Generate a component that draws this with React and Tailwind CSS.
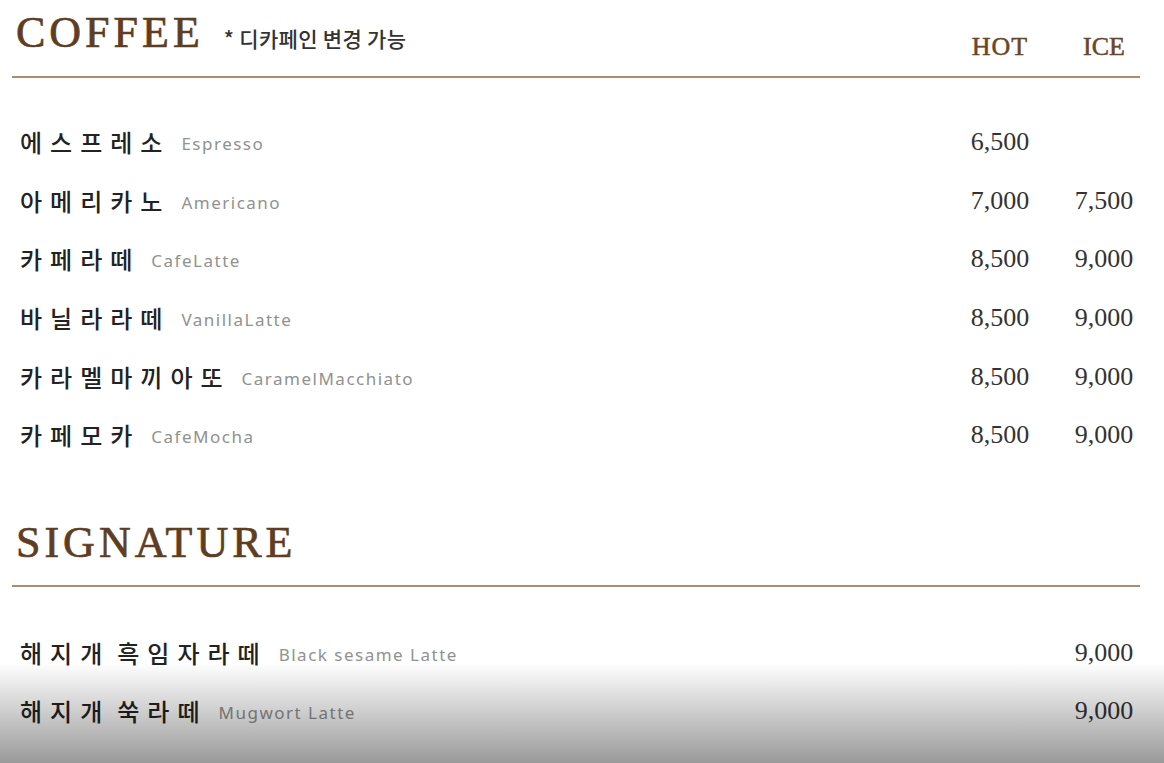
const serif = { fontFamily: '"Liberation Serif", "Noto Sans CJK KR", serif' };

const coffee = [
  { ko: "에스프레소", en: "Espresso", hot: "6,500", ice: "" },
  { ko: "아메리카노", en: "Americano", hot: "7,000", ice: "7,500" },
  { ko: "카페라떼", en: "CafeLatte", hot: "8,500", ice: "9,000" },
  { ko: "바닐라라떼", en: "VanillaLatte", hot: "8,500", ice: "9,000" },
  { ko: "카라멜마끼아또", en: "CaramelMacchiato", hot: "8,500", ice: "9,000" },
  { ko: "카페모카", en: "CafeMocha", hot: "8,500", ice: "9,000" },
];

const signature = [
  { ko: "해지개 흑임자라떼", en: "Black sesame Latte", hot: "", ice: "9,000" },
  { ko: "해지개 쑥라떼", en: "Mugwort Latte", hot: "", ice: "9,000" },
];

function Row({ item }) {
  // words split so the space between them doesn't pick up the wide tracking
  const words = item.ko.split(" ");
  return (
    <div className="flex items-center h-[58.6px] pr-[8px]">
      <div className="flex-1 flex items-center pl-[20px]">
        <span className="flex gap-[7px] text-[24px] leading-none tracking-[8px] font-medium text-[#222]" style={{ fontFamily: '"Noto Sans CJK KR", sans-serif' }}>
          {words.map((w) => (
            <span key={w}>{w}</span>
          ))}
        </span>
        <span className="ml-[11px] mt-[3px] text-[17px] leading-none tracking-[1.5px] text-[#919191]" style={{ fontFamily: '"Noto Sans", "Noto Sans CJK KR", sans-serif' }}>
          {item.en}
        </span>
      </div>
      <div className="w-[104px] text-center text-[26px] leading-none text-[#333]" style={serif}>{item.hot}</div>
      <div className="w-[104px] text-center text-[26px] leading-none text-[#333]" style={serif}>{item.ice}</div>
    </div>
  );
}

function Divider() {
  return <div className="ml-[12px] mr-[24px] h-[2px] bg-[#ad8c71]" />;
}

export default function App() {
  return (
    <div className="relative w-[1164px] h-[763px] overflow-hidden bg-white">
      {/* coffee */}
      <div className="flex h-[76px] pr-[8px]">
        <div className="flex-1 flex items-start pl-[16px]">
          <h1 className="pt-[11px] text-[44px] leading-[44px] tracking-[4px] text-[#5e3d22] [-webkit-text-stroke:0.7px_#5e3d22]" style={serif}>COFFEE</h1>
          <span className="ml-[20px] pt-[28px] text-[21px] leading-none tracking-[0.3px] font-medium text-[#333]" style={{ fontFamily: '"Noto Sans CJK KR", sans-serif' }}>
            * 디카페인 변경 가능
          </span>
        </div>
        <div className="w-[104px] pt-[34px] text-center text-[26px] leading-[26px] tracking-[1px] text-[#6b4526] [-webkit-text-stroke:0.5px_#6b4526]" style={serif}>HOT</div>
        <div className="w-[104px] pt-[34px] text-center text-[26px] leading-[26px] text-[#6b4526] [-webkit-text-stroke:0.5px_#6b4526]" style={serif}>ICE</div>
      </div>
      <Divider />
      <div className="pt-[35px]">
        {coffee.map((item) => (
          <Row key={item.en} item={item} />
        ))}
      </div>

      {/* signature */}
      <div className="mt-[44px] h-[76px] pl-[16px]">
        <h2 className="pt-[12px] text-[44px] leading-[44px] tracking-[4px] text-[#5e3d22] [-webkit-text-stroke:0.7px_#5e3d22]" style={serif}>SIGNATURE</h2>
      </div>
      <Divider />
      <div className="pt-[37px]">
        {signature.map((item) => (
          <Row key={item.en} item={item} />
        ))}
      </div>

      <div className="pointer-events-none absolute left-0 right-0 bottom-0 h-[100px] bg-gradient-to-b from-black/0 to-black/40" />
    </div>
  );
}
